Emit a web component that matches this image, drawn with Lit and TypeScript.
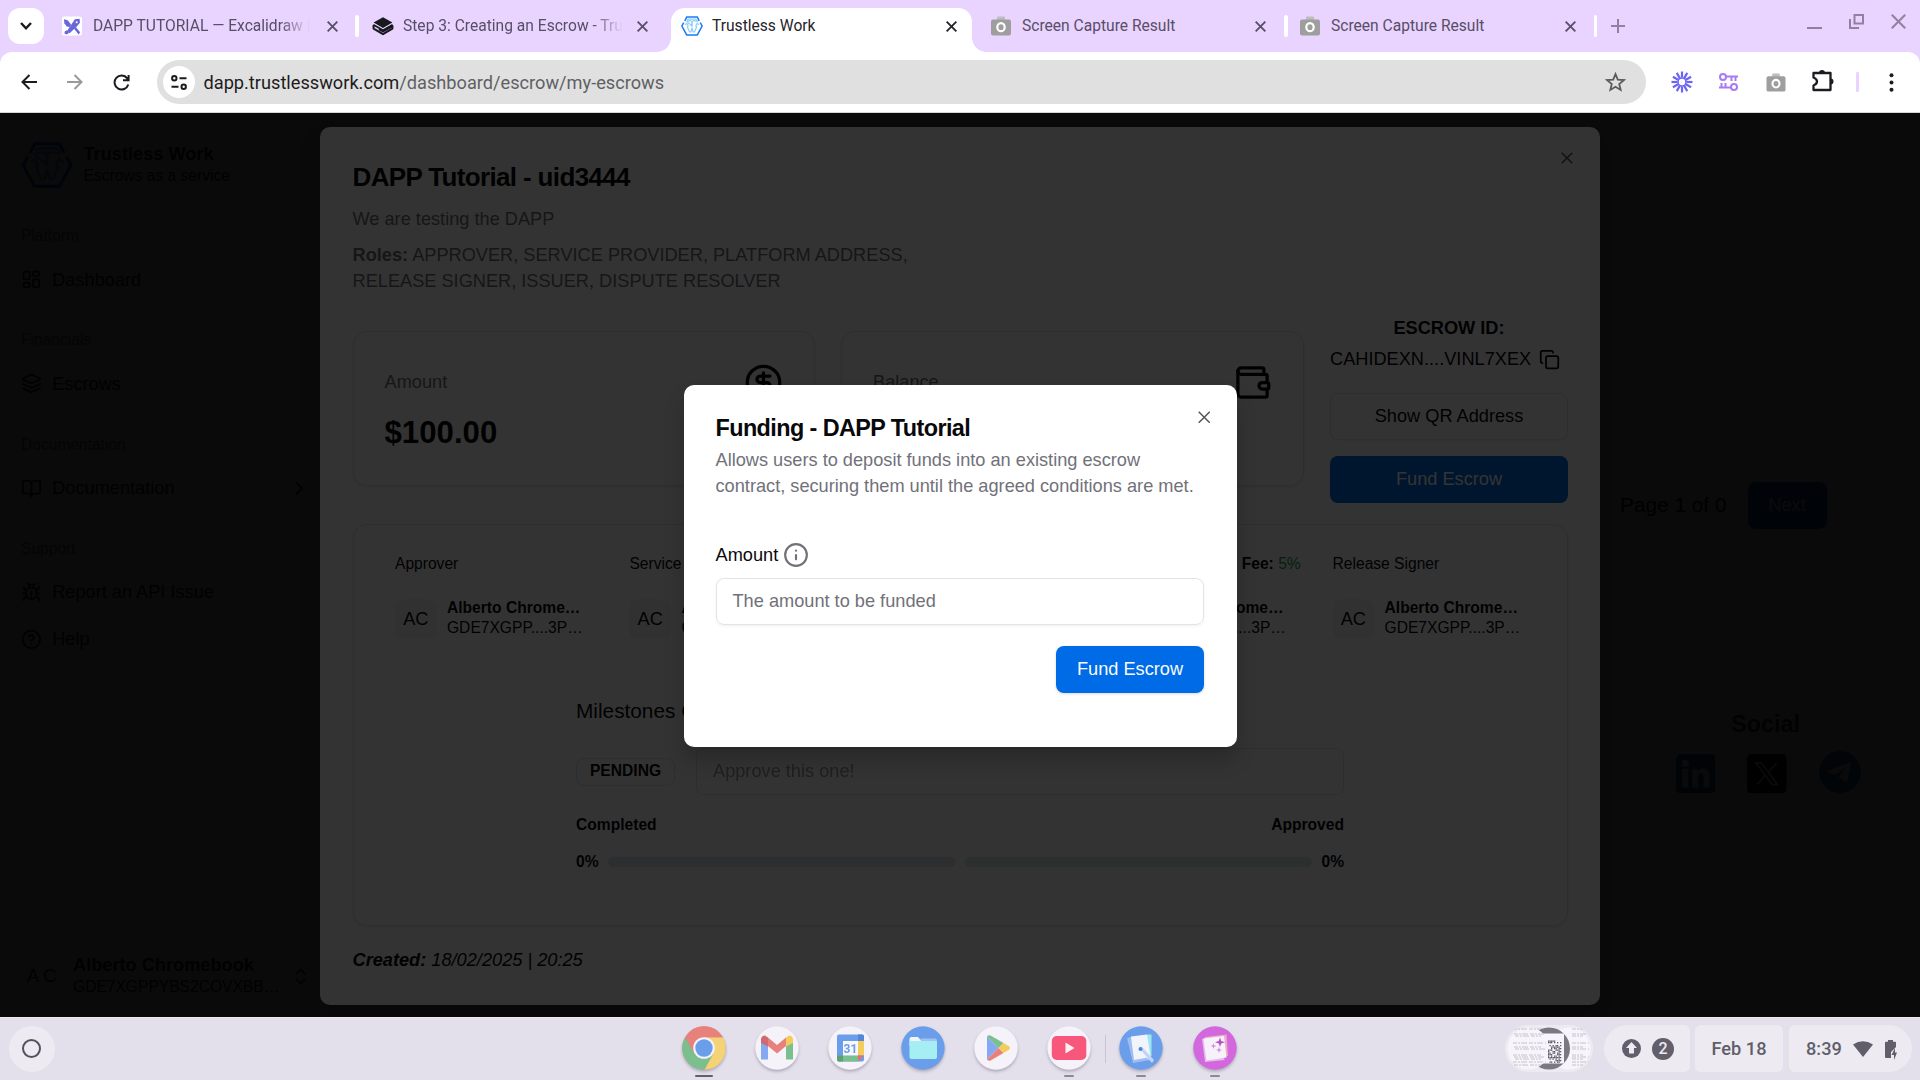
import { LitElement, html, svg, css, type TemplateResult, type SVGTemplateResult } from "lit";
import { customElement } from "lit/decorators.js";

/* ---------- line icons on a 24 unit grid ---------- */
const line = (body: SVGTemplateResult, cls = "i20") =>
  html`<svg class="ln ${cls}" viewBox="0 0 24 24" fill="none" stroke="currentColor" stroke-width="2" stroke-linecap="round" stroke-linejoin="round">${body}</svg>`;

const icons = {
  dashboard: svg`<rect x="3" y="3" width="7" height="9" rx="1"/><rect x="14" y="3" width="7" height="5" rx="1"/><rect x="14" y="12" width="7" height="9" rx="1"/><rect x="3" y="16" width="7" height="5" rx="1"/>`,
  layers: svg`<path d="m12.83 2.18a2 2 0 0 0-1.66 0L2.6 6.08a1 1 0 0 0 0 1.83l8.58 3.91a2 2 0 0 0 1.66 0l8.58-3.9a1 1 0 0 0 0-1.83Z"/><path d="m22 17.65-9.17 4.16a2 2 0 0 1-1.66 0L2 17.65"/><path d="m22 12.65-9.17 4.16a2 2 0 0 1-1.66 0L2 12.65"/>`,
  book: svg`<path d="M12 7v14"/><path d="M3 18a1 1 0 0 1-1-1V4a1 1 0 0 1 1-1h5a4 4 0 0 1 4 4 4 4 0 0 1 4-4h5a1 1 0 0 1 1 1v13a1 1 0 0 1-1 1h-6a3 3 0 0 0-3 3 3 3 0 0 0-3-3z"/>`,
  bug: svg`<path d="m8 2 1.88 1.88"/><path d="M14.12 3.88 16 2"/><path d="M9 7.13v-1a3.003 3.003 0 1 1 6 0v1"/><path d="M12 20c-3.3 0-6-2.7-6-6v-3a4 4 0 0 1 4-4h4a4 4 0 0 1 4 4v3c0 3.3-2.7 6-6 6"/><path d="M12 20v-9"/><path d="M6.53 9C4.6 8.8 3 7.1 3 5"/><path d="M6 13H2"/><path d="M3 21c0-2.1 1.7-3.9 3.8-4"/><path d="M20.97 5c0 2.1-1.6 3.8-3.5 4"/><path d="M22 13h-4"/><path d="M17.2 17c2.1.1 3.8 1.9 3.8 4"/>`,
  help: svg`<circle cx="12" cy="12" r="10"/><path d="M9.09 9a3 3 0 0 1 5.83 1c0 2-3 3-3 3"/><path d="M12 17h.01"/>`,
  chevron: svg`<path d="m9 18 6-6-6-6"/>`,
  updown: svg`<path d="m7 15 5 5 5-5"/><path d="m7 9 5-5 5 5"/>`,
  dollar: svg`<circle cx="12" cy="12" r="10"/><path d="M16 8h-6a2 2 0 1 0 0 4h4a2 2 0 1 1 0 4H8"/><path d="M12 18V6"/>`,
  wallet: svg`<path d="M19 7V4a1 1 0 0 0-1-1H5a2 2 0 0 0 0 4h15a1 1 0 0 1 1 1v4h-3a2 2 0 0 0 0 4h3a1 1 0 0 0 1-1v-2a1 1 0 0 0-1-1"/><path d="M3 5v14a2 2 0 0 0 2 2h15a1 1 0 0 0 1-1v-4"/>`,
  copy: svg`<rect width="14" height="14" x="8" y="8" rx="2"/><path d="M4 16c-1.1 0-2-.9-2-2V4c0-1.1.9-2 2-2h10c1.1 0 2 .9 2 2"/>`,
  info: svg`<circle cx="12" cy="12" r="10"/><path d="M12 16v-4"/><path d="M12 8h.01"/>`,
};

const cross = (cls: string) =>
  html`<svg class=${cls} viewBox="0 0 12 12" fill="none" stroke="currentColor"><path d="M.7.7 11.3 11.3M11.3.7.7 11.3"/></svg>`;

const hexLogo = (cls: string, outer: string, inner: string, w: number) => html`
  <svg class=${cls} viewBox="0 0 52 46" fill="none" stroke-width=${w}>
    <path stroke=${outer} d="M9 11 13.500 1.800H38.500L43 11M45.500 15 50 23 38.500 44.200H13.500L2 23 6.500 15"/>
    <g stroke=${inner} stroke-width=${w * 0.8}>
      <path d="M14 8.500 18 6.500H34L38 8.500V12L32 10.500Q28 9.500 26.500 13V23M25.500 23V13Q24 9.500 20 10.500L14 12Z"/>
      <path d="M9.500 20 14 17 17 23 15 25 20 37 23.500 37 26 27 28.500 37 32 37 37 25 35 23 38 17 42.500 20"/>
    </g>
  </svg>`;

const camera = html`
  <svg class="fav" viewBox="0 0 20 20">
    <path fill="#bdbdbd" d="M6 4V1.500Q6 .5 7 .5h6q1 0 1 1V4Z"/>
    <path fill="#9e9e9e" d="M0 5.500Q0 3.500 2 3.500H18Q20 3.500 20 5.500V17.500Q20 19.500 18 19.500H2Q0 19.500 0 17.500Z"/>
    <ellipse cx="10" cy="11.200" rx="3.700" ry="4" fill="#9e9e9e" stroke="#fff" stroke-width="2.200"/>
  </svg>`;

const excalidraw = html`
  <svg class="fav" viewBox="0 0 21 20">
    <rect width="21" height="20" rx="3" fill="#fff"/>
    <g fill="#6965db">
      <path d="M2 3 6 4 9.500 8.500 8.200 11 5 10.500 2.500 7Z"/>
      <path d="M13.500 3 18.500 2.500 18.800 6.500 15.500 10.500 8 17.500 5.500 15Z"/>
      <path d="M3 15.500 5.500 14.500 7.500 17 5 19 2.500 18Z"/>
      <path d="M12.500 12.500 14.500 11 19 16.500 17.500 19Z"/>
    </g>
    <circle cx="15.400" cy="6" r="1.100" fill="#fff"/>
  </svg>`;

const gitbook = html`
  <svg class="fav wide" viewBox="0 0 22 20">
    <path fill="#17191e" d="M11 1.200 20.400 6.600 11 12 1.600 6.600Z"/>
    <path fill="none" stroke="#17191e" stroke-width="2.100" stroke-linejoin="round" d="M1.600 9V12.600L11 18.200 20.400 12.600V10L11 15.300 7 13"/>
    <path fill="none" stroke="#17191e" stroke-width="1.800" d="M1.400 8.700 11 14.200 20.600 8.700"/>
  </svg>`;

interface Tab { cls: string; icon: TemplateResult; title: string }

@customElement("browser-tabs")
class BrowserTabs extends LitElement {
  static styles = css`
    :host { display: flex; height: 52px; background: #e8d4ff; font-family: Roboto, sans-serif; font-size: 15.600px; color: #584e66; }
    .search { width: 36px; height: 36px; margin: 8px 8px 0; border-radius: 12px; background: #fff; display: flex; align-items: center; justify-content: center; }
    .search svg { width: 12px; height: 8px; }
    .tab { display: flex; align-items: center; box-sizing: border-box; height: 52px; }
    .fav { width: 20px; height: 20px; flex: none; }
    .fav.wide { width: 22px; }
    .hex { width: 22px; height: 20px; flex: none; }
    .title { flex: 1; overflow: hidden; white-space: nowrap; margin-left: 11px; line-height: 22px; }
    .fade .title { -webkit-mask-image: linear-gradient(90deg, #000 86%, transparent); mask-image: linear-gradient(90deg, #000 86%, transparent); }
    .x { width: 11px; height: 11px; flex: none; stroke-width: 2; }
    .t1 { width: 303px; padding: 0 17px 0 10px; }
    .t1 .title { margin: 0 17px 0 11px; }
    .t2 { width: 312px; padding: 0 23px 0 13px; }
    .t2 .title { margin: 0 14px 0 9px; }
    .t3 { width: 301px; padding: 0 15px 0 10px; background: #fff; border-radius: 14px 14px 0 0; height: 44px; margin-top: 8px; padding-bottom: 8px; color: #26232b; position: relative; }
    .t3 .title { margin-left: 9px; }
    .t3::before, .t3::after { content: ""; position: absolute; bottom: 0; width: 14px; height: 14px; }
    .t3::before { left: -14px; background: radial-gradient(circle at 0 0, transparent 13.500px, #fff 14px); }
    .t3::after { right: -14px; background: radial-gradient(circle at 100% 0, transparent 13.500px, #fff 14px); }
    .t4 { width: 312px; padding: 0 18px 0 19px; }
    .t5 { width: 306px; padding: 0 18px 0 12px; }
    .div { width: 4px; height: 22px; margin-top: 15px; background: #fff; border-radius: 2px; }
    .div.thin { width: 3px; }
    .plus { width: 14px; height: 14px; margin: 19px 0 0 14px; stroke: #8f819f; stroke-width: 2; }
    .win { display: flex; gap: 27px; margin: 14px 14px 0 auto; color: #8f819f; }
    .win svg { width: 15px; height: 15px; stroke-width: 2; fill: none; stroke: currentColor; }
  `;
  private tabs: Tab[] = [
    { cls: "t1 fade", icon: excalidraw, title: "DAPP TUTORIAL — Excalidraw Plus" },
    { cls: "t2 fade", icon: gitbook, title: "Step 3: Creating an Escrow - Trustless Work" },
    { cls: "t3", icon: hexLogo("hex", "#1a7df0", "#8fd0fb", 3.6), title: "Trustless Work" },
    { cls: "t4", icon: camera, title: "Screen Capture Result" },
    { cls: "t5", icon: camera, title: "Screen Capture Result" },
  ];
  render() {
    return html`
      <div class="search"><svg viewBox="0 0 12 8" fill="none" stroke="#1d1b20" stroke-width="2.400"><path d="M1 1 6 6.300 11 1"/></svg></div>
      ${this.tabs.map((t, i) => html`
        <div class="tab ${t.cls}">${t.icon}<span class="title">${t.title}</span>${cross("x")}</div>
        ${i === 1 || i === 2 ? "" : html`<div class="div ${i === 4 ? "thin" : ""}"></div>`}
      `)}
      <svg class="plus" viewBox="0 0 14 14"><path d="M7 0V14M0 7H14"/></svg>
      <div class="win">
        <svg viewBox="0 0 15 15"><path d="M0 14H15"/></svg>
        <svg viewBox="0 0 15 15"><path d="M5.500 1H14V9.500H5.500ZM1 5V14H10"/></svg>
        <svg viewBox="0 0 15 15"><path d="M.8.8 14.200 14.200M14.200.8.8 14.200"/></svg>
      </div>`;
  }
}

@customElement("browser-toolbar")
class BrowserToolbar extends LitElement {
  static styles = css`
    :host { display: block; height: 61px; background: #e8d4ff; }
    .bar { height: 61px; box-sizing: border-box; background: #fff; border-radius: 12px 12px 0 0; border-bottom: 1px solid #d5d7d5; display: flex; align-items: center; padding-left: 21px; }
    .nav { width: 16px; height: 16px; fill: none; stroke: #1d1b20; stroke-width: 2; flex: none; }
    .fwd { stroke: #9a9a9c; margin-left: 30px; }
    .rel { width: 17px; height: 17px; margin-left: 30px; }
    .omni { margin-left: 26.500px; width: 1489px; height: 44px; border-radius: 22px; background: #e0e0e0; display: flex; align-items: center; box-sizing: border-box; padding: 0 20px 0 6px; font: 18.200px/24px Roboto, sans-serif; color: #5f6064; }
    .site { width: 32px; height: 32px; border-radius: 50%; background: #fff; display: flex; align-items: center; justify-content: center; margin-right: 9px; }
    .site svg { width: 16px; height: 15px; }
    .omni b { font-weight: 400; color: #1d1b20; }
    .url { flex: 1; white-space: nowrap; padding-top: 1px; }
    .star { width: 21px; height: 20px; }
    .burst { width: 22px; height: 22px; margin-left: 25px; }
    .keys { width: 19px; height: 20px; margin-left: 26px; }
    .cam { width: 20px; height: 19px; margin-left: 28px; }
    .cam .fav { width: 20px; height: 19px; display: block; }
    .puz { width: 22px; height: 23px; margin: -4px 0 0 26px; }
    .div { width: 3px; height: 20px; background: #e8d4ff; margin-left: 22px; border-radius: 1px; }
    .dots { width: 5px; height: 19px; margin-left: 30px; }
  `;
  render() {
    const rays = Array.from({ length: 12 }, (_, i) => i * 30);
    return html`<div class="bar">
      <svg class="nav" viewBox="0 0 16 16"><path d="M16 8H1.800M8.500 1 1.500 8 8.500 15"/></svg>
      <svg class="nav fwd" viewBox="0 0 16 16"><path d="M0 8H14.200M7.500 1 14.500 8 7.500 15"/></svg>
      <svg class="nav rel" viewBox="0 0 17 17"><path d="M15.300 10.500A7 7 0 1 1 14.200 4.300L15.600 6.200M15.600 1V6.300H10"/></svg>
      <div class="omni">
        <div class="site"><svg viewBox="0 0 16 15" fill="none" stroke="#1d1b20" stroke-width="2"><circle cx="3.300" cy="3.300" r="2.200"/><path d="M8.500 3.300H15.500M.5 11.700H7.500"/><circle cx="12.700" cy="11.700" r="2.200"/></svg></div>
        <span class="url"><b>dapp.trustlesswork.com</b>/dashboard/escrow/my-escrows</span>
        <svg class="star" viewBox="0 0 22 21" fill="none" stroke="#5a5b5f" stroke-width="1.900"><path d="M11 2.200 13.400 8 19.800 8.500 14.900 12.600 16.400 18.800 11 15.500 5.600 18.800 7.100 12.600 2.200 8.500 8.600 8Z"/></svg>
      </div>
      <svg class="burst" viewBox="0 0 22 22" fill="none" stroke="#6a66f5" stroke-width="2.200">
        <circle cx="11" cy="11" r="4" stroke-width="1.600"/>
        ${rays.map((a) => svg`<path d="M11 .5V6.500" transform="rotate(${a} 11 11)"/>`)}
      </svg>
      <svg class="keys" viewBox="0 0 19 20" fill="none" stroke="#a77bf5" stroke-width="2">
        <circle cx="4" cy="5" r="3"/><path d="M7 4.500H19M12.500 5V9M16.500 5V9"/>
        <circle cx="15" cy="15" r="3"/><path d="M12 15.500H0M2.500 15V11M6.500 15V11"/>
      </svg>
      <div class="cam">${camera}</div>
      <svg class="puz" viewBox="0 0 22 23"><path fill="none" stroke="#1d1b20" stroke-width="2.300" stroke-linejoin="round" d="M1.500 4H18.500V21H1.500V16.500Q5 15 5 12.500 5 10 1.500 8.500Z"/><path fill="#1d1b20" d="M7 4a3 3 0 0 1 6 0ZM18.500 9.500a3 3 0 0 1 0 6Z"/></svg>
      <div class="div"></div>
      <svg class="dots" viewBox="0 0 5 19" fill="#1d1b20"><circle cx="2.500" cy="2.300" r="2"/><circle cx="2.500" cy="9.500" r="2"/><circle cx="2.500" cy="16.700" r="2"/></svg>
    </div>`;
  }
}

const sans = css`"Liberation Sans", Arial, sans-serif`;

/* The application behind both dimming layers. */
@customElement("dashboard-page")
class DashboardPage extends LitElement {
  static styles = css`
    :host { display: flex; height: 904px; background: #fff; font: 18.200px/26px ${sans}; color: #09090b; }
    .ln { flex: none; }
    .i20 { width: 20.800px; height: 20.800px; }
    .side { width: 335px; box-sizing: border-box; display: flex; flex-direction: column; padding: 29px 0 10px 21px; background: #fbfbfb; color: #27272a; }
    .brand { display: flex; height: 46px; align-items: center; margin-bottom: 28px; }
    .hex { width: 52px; height: 46px; margin-right: 10.500px; }
    .name { font-weight: 700; line-height: 21px; white-space: nowrap; }
    .sub { font-size: 15.600px; line-height: 21px; white-space: nowrap; }
    .label { height: 40px; line-height: 40px; font-size: 15.600px; color: #77777a; }
    .item { height: 47px; display: flex; align-items: center; gap: 10.400px; width: 289px; }
    .item span { flex: 1; }
    .group { padding-bottom: 17.300px; }
    .user { margin-top: auto; height: 62px; display: flex; align-items: center; padding-left: 6px; }
    .av { width: 46px; white-space: nowrap; }
    .who { width: 205px; margin-right: 12px; overflow: hidden; }
    .main { flex: 1; padding-top: 368.500px; display: flex; flex-direction: column; align-items: flex-end; }
    .pager { display: flex; align-items: center; gap: 21px; font-size: 20.800px; margin-right: 93.500px; }
    .next { width: 79px; height: 47px; border-radius: 8px; background: #006be6; color: #fff; font-size: 18.200px; line-height: 47px; text-align: center; }
    .social { margin: 180px 59.500px 0 0; width: 185px; }
    .social h3 { margin: 0 5px 13px 0; text-align: center; font: 700 23.400px/31px ${sans}; color: #3b4453; }
    .row { display: flex; justify-content: space-between; align-items: center; height: 42px; }
    .row svg { width: 39.500px; height: 39.500px; }
    .row svg.tg { width: 42px; height: 42px; margin-top: -4px; }
  `;
  render() {
    return html`
      <aside class="side">
        <div class="brand">${hexLogo("hex", "#0060e0", "#6fc0ff", 3)}
          <div><div class="name">Trustless Work</div><div class="sub">Escrows as a service</div></div>
        </div>
        <div class="group"><div class="label">Platform</div><div class="item">${line(icons.dashboard)}<span>Dashboard</span></div></div>
        <div class="group"><div class="label">Financials</div><div class="item">${line(icons.layers)}<span>Escrows</span></div></div>
        <div class="group"><div class="label">Documentation</div><div class="item">${line(icons.book)}<span>Documentation</span>${line(icons.chevron)}</div></div>
        <div class="group"><div class="label">Support</div>
          <div class="item">${line(icons.bug)}<span>Report an API Issue</span></div>
          <div class="item">${line(icons.help)}<span>Help</span></div></div>
        <div class="user"><span class="av">A C</span>
          <div class="who"><div class="name">Alberto Chromebook</div><div class="sub">GDE7XGPPYBS2COVXBB…</div></div>
          ${line(icons.updown)}</div>
      </aside>
      <main class="main">
        <div class="pager"><span>Page 1 of 0</span><span class="next">Next</span></div>
        <div class="social"><h3>Social</h3>
          <div class="row">
            <svg viewBox="0 0 40 40"><rect width="40" height="40" rx="5" fill="#0077b5"/><g fill="#fff"><circle cx="9.500" cy="9.500" r="3.500"/><path d="M6.500 15H12.500V34H6.500ZM16.500 15H22V17.600Q24 14.500 28 14.500 34 14.500 34 22.500V34H28V24Q28 19.500 25.200 19.500 22.500 19.500 22.500 24V34H16.500Z"/></g></svg>
            <svg viewBox="0 0 40 40"><rect width="40" height="40" rx="5" fill="#000"/><path fill="none" stroke="#fff" stroke-width="1.800" d="M9 9H14.500L31 31H25.500ZM30 9 21.500 18.500M18 22 10 31"/></svg>
            <svg class="tg" viewBox="0 0 42 42"><circle cx="21" cy="21" r="21" fill="#1c93d2"/><path fill="#fff" d="M7.500 20.500 32 11 28 32 19.500 26 27 17 15.500 24Z"/></svg>
          </div>
        </div>
      </main>`;
  }
}

/* The escrow detail window. */
@customElement("escrow-detail")
class EscrowDetail extends LitElement {
  static styles = css`
    :host { display: flex; flex-direction: column; box-sizing: border-box; width: 1280px; height: 878px; padding: 37px 32.500px 0; border: 0; border-radius: 10px; background: #fff; box-shadow: 0 13px 20px rgba(0,0,0,.2); font: 18.200px/26px ${sans}; color: #09090b; position: relative; }
    .ln { flex: none; }
    .big { width: 39px; height: 39px; }
    .i20 { width: 21px; height: 21px; }
    .x { position: absolute; right: 27px; top: 25px; width: 12px; height: 12px; stroke-width: 1.400; opacity: .7; }
    h2 { margin: 0; font: 700 26px/26px ${sans}; letter-spacing: -.65px; }
    .muted { color: #71717a; }
    .desc { margin-top: 16px; }
    .roles { margin-top: 10px; width: 600px; }
    .top { display: grid; grid-template-columns: 462.500px 463px 238px; gap: 26px; margin-top: 21px; height: 187px; }
    .card { border: 1.300px solid #e4e4e7; border-radius: 14px; box-sizing: border-box; box-shadow: 0 1px 3px rgba(0,0,0,.1); }
    .stat { margin-top: 16px; height: 155px; padding: 31px 31px 0; }
    .head { display: flex; justify-content: space-between; align-items: center; height: 39px; }
    .head span { padding-bottom: 2px; }
    .val { font: 700 31.200px/42px ${sans}; margin-top: 10px; }
    .id { display: flex; flex-direction: column; }
    .id b { text-align: center; }
    .addr { display: flex; justify-content: space-between; align-items: center; height: 26px; margin: 5px 8px 0 0; white-space: nowrap; }
    .btn { height: 47px; border-radius: 8px; line-height: 44px; text-align: center; box-sizing: border-box; }
    .out { border: 1.300px solid #e4e4e7; margin-top: 21px; box-shadow: 0 1px 2px rgba(0,0,0,.05); }
    .pri { background: #006be6; color: #fff; margin-top: 15.500px; line-height: 47px; }
    .lower { margin-top: 22px; height: 401.500px; }
    .people { display: grid; grid-template-columns: repeat(5, 234.400px); padding: 26.500px 0 0 41.500px; font-size: 15.600px; height: 114px; box-sizing: border-box; }
    .person { width: 202.500px; overflow: hidden; }
    .plabel { display: flex; justify-content: space-between; height: 24px; line-height: 24px; white-space: nowrap; }
    .plabel em { font-style: normal; color: #16a34a; }
    .who { display: flex; align-items: center; margin-top: 22px; gap: 10.400px; line-height: 20.800px; white-space: nowrap; }
    .nm { padding-bottom: 3px; }
    .av { width: 41.600px; height: 41.600px; border-radius: 10.400px; background: #f4f4f5; text-align: center; line-height: 41.600px; font-size: 18.200px; }
    .miles { width: 768px; margin: 59px auto 0; }
    .mt { font-size: 20.800px; line-height: 26px; }
    .mrow { display: flex; justify-content: space-between; align-items: center; height: 47px; margin-top: 24px; }
    .badge { width: 99px; height: 28px; box-sizing: border-box; border: 1.300px solid #e4e4e7; border-radius: 8px; font: 700 15.600px/23px ${sans}; text-align: center; }
    .inp { width: 648px; height: 47px; box-sizing: border-box; border: 1.300px solid #e4e4e7; border-radius: 8px; line-height: 44px; padding-left: 16px; }
    .inp span { opacity: .7; }
    .lab { display: flex; justify-content: space-between; font-weight: 700; font-size: 15.600px; margin-top: 17px; }
    .bars { display: flex; align-items: center; gap: 9px; font-weight: 700; font-size: 15.600px; margin-top: 11px; line-height: 26px; }
    .bar { flex: 1; height: 10.400px; border-radius: 5.200px; background: #dde4ee; }
    .bar.g { background: #d5e8e4; }
    .created { font-style: italic; margin-top: 21px; }
  `;
  render() {
    const people: [string, boolean][] = [["Approver", false], ["Service Provider", false], ["Dispute Resolver", false], ["Platform", true], ["Release Signer", false]];
    return html`
      ${cross("x")}
      <h2>DAPP Tutorial - uid3444</h2>
      <div class="desc muted">We are testing the DAPP</div>
      <div class="roles muted"><b>Roles:</b> APPROVER, SERVICE PROVIDER, PLATFORM ADDRESS, RELEASE SIGNER, ISSUER, DISPUTE RESOLVER</div>
      <div class="top">
        <div class="card stat"><div class="head"><span class="muted">Amount</span>${line(icons.dollar, "big")}</div><div class="val">$100.00</div></div>
        <div class="card stat"><div class="head"><span class="muted">Balance</span>${line(icons.wallet, "big")}</div><div class="val">$0.00</div></div>
        <div class="id"><b>ESCROW ID:</b>
          <div class="addr"><span>CAHIDEXN....VINL7XEX</span>${line(icons.copy)}</div>
          <div class="btn out">Show QR Address</div>
          <div class="btn pri">Fund Escrow</div>
        </div>
      </div>
      <div class="card lower">
        <div class="people">${people.map(([p, fee]) => html`
          <div class="person">
            <div class="plabel"><span>${p}</span>${fee ? html`<span><b>Fee:</b> <em>5%</em></span>` : ""}</div>
            <div class="who"><div class="av">AC</div><div class="nm"><b>Alberto Chrome…</b><div>GDE7XGPP....3P…</div></div></div>
          </div>`)}
        </div>
        <div class="miles">
          <div class="mt">Milestones Completed</div>
          <div class="mrow"><div class="badge">PENDING</div><div class="inp muted"><span>Approve this one!</span></div></div>
          <div class="lab"><span>Completed</span><span>Approved</span></div>
          <div class="bars"><span>0%</span><div class="bar"></div><div class="bar g"></div><span>0%</span></div>
        </div>
      </div>
      <div class="created"><b>Created:</b> 18/02/2025 | 20:25</div>`;
  }
}

@customElement("funding-dialog")
class FundingDialog extends LitElement {
  static styles = css`
    :host { display: flex; flex-direction: column; box-sizing: border-box; width: 553px; height: 361.500px; padding: 29.500px 32.500px 0 32px; border-radius: 10px; background: #fff; box-shadow: 0 13px 20px rgba(0,0,0,.2); font: 18.200px/26px ${sans}; color: #09090b; position: relative; }
    .x { position: absolute; right: 26.500px; top: 25.500px; width: 12.500px; height: 12.500px; stroke-width: 1.400; opacity: .7; }
    h2 { margin: 0; font: 700 23.400px/26px ${sans}; letter-spacing: -.585px; }
    p { margin: 6.500px 0 0; color: #71717a; }
    .lab { display: flex; align-items: center; gap: 5px; height: 26px; margin-top: 42.500px; }
    .ic { width: 26px; height: 26px; color: #71717a; }
    .inp { height: 47px; box-sizing: border-box; border: 1.300px solid #e4e4e7; border-radius: 8px; box-shadow: 0 1px 3px rgba(0,0,0,.06); margin-top: 10.500px; line-height: 44px; padding-left: 16px; color: #71717a; }
    .btn { align-self: flex-end; width: 148px; height: 47px; border-radius: 8px; background: #006be6; color: #fafafa; text-align: center; line-height: 47px; margin-top: 20.500px; box-shadow: 0 1px 3px rgba(0,0,0,.15); }
  `;
  render() {
    return html`${cross("x")}
      <h2>Funding - DAPP Tutorial</h2>
      <p>Allows users to deposit funds into an existing escrow contract, securing them until the agreed conditions are met.</p>
      <div class="lab">Amount ${line(icons.info, "ic")}</div>
      <div class="inp">The amount to be funded</div>
      <div class="btn">Fund Escrow</div>`;
  }
}

/* Dock artwork on a 44 unit disc. */
const disc = (fill: string, body: SVGTemplateResult) =>
  html`<svg class="app" viewBox="0 0 44 44"><circle cx="22" cy="22" r="21.700" fill=${fill}/>${body}</svg>`;

const dock = {
  chrome: disc("#e8807c", svg`
    <path fill="#7bbf8e" d="M3.200 11.200A21.700 21.700 0 0 0 22.500 43.700L32 27.500H12.500Z"/>
    <path fill="#f4d377" d="M22.500 43.700A21.700 21.700 0 0 0 40.900 11.200H22L31.500 27.500Z"/>
    <path fill="#e8807c" d="M3.200 11.200A21.700 21.700 0 0 1 40.900 11.200H22Q15 12 12.600 19.500L12.500 27.500Z"/>
    <circle cx="22" cy="22" r="10.800" fill="#f4f2f8"/><circle cx="22" cy="22" r="8.700" fill="#6a9eea"/>`),
  gmail: disc("#f5f3f9", svg`
    <path fill="#85a9f0" d="M6 13V33.500H13V18Z"/><path fill="#7bbf8e" d="M31 18V33.500H38V13Z"/>
    <path fill="#e8807c" d="M13 11.500 22 19 31 11.500V20L22 27.500 13 20Z"/>
    <path fill="#d06a6e" d="M6 17V13Q6.500 9.500 10 9.500L13 11.500V20.500Z"/><path fill="#f4cc5c" d="M38 17V13Q37.500 9.500 34 9.500L31 11.500V20.500Z"/>`),
  calendar: disc("#f5f3f9", svg`
    <rect x="9" y="8.500" width="27" height="27" rx="2" fill="#6a9eea"/>
    <path fill="#5584d8" d="M30 8.500H34Q36 8.500 36 10.500V15H30Z"/><path fill="#f4cc5c" d="M30 15H36V29.500H30Z"/>
    <path fill="#7bbf8e" d="M9 29.500H30V35.500H11Q9 35.500 9 33.500Z"/><path fill="#5aa274" d="M9 29.500H15V35.500H11Q9 35.500 9 33.500Z"/><path fill="#e8706c" d="M30 29.500H36L30 35.500Z"/>
    <rect x="15" y="15" width="15" height="14.500" fill="#f8f7fb"/>
    <text x="22.400" y="26.700" font-family="Roboto, sans-serif" font-size="12" font-weight="700" fill="#6a9eea" text-anchor="middle">31</text>`),
  files: disc("#6a9eea", svg`
    <path fill="#a6c0f2" d="M20 12.500H34Q36 12.500 36 14.500V20H14Z"/><path fill="#f2f4fb" d="M8.500 13Q8.500 11 10.500 11H17L20 14.500V20H8.500Z"/>
    <path fill="#a5eef4" d="M8.500 15H36V31Q36 33 34 33H10.500Q8.500 33 8.500 31Z"/>`),
  play: disc("#f5f3f9", svg`
    <path fill="#85a9f0" d="M13 10.500V33.500L24.500 22Z"/><path fill="#7bbf8e" d="M13 10.500Q14.500 8.500 17 9.800L29.500 17 24.500 22Z"/>
    <path fill="#e8807c" d="M13 33.500Q14.500 35.500 17 34.200L29.500 27 24.500 22Z"/><path fill="#f4cc5c" d="M29.500 17 35 20.300Q37 22 35 23.700L29.500 27 24.500 22Z"/>`),
  youtube: disc("#f5f3f9", svg`
    <rect x="4.800" y="10" width="34.500" height="24" rx="5" fill="#f6577b"/><path fill="#fbeff4" d="M18.500 16.500V27.500L27.500 22Z"/>`),
  journal: disc("#6a9eea", svg`
    <path fill="#9fbdf0" d="M8 12 13 11 31 34 14 37Z"/><path fill="#9be8f2" d="M28 8.500H32.500V30L28 34Z"/>
    <path fill="#f2f4fb" d="M12 10.500 28 8.500 31.500 31 15 34Z"/><path fill="#c3d3f5" d="M20 22 23 21 35 34 33 37Z"/><circle cx="21.500" cy="23" r="2" fill="#4c86e0"/>`),
  sparkle: disc("#d367de", svg`
    <path fill="#f0aac4" d="M12 11 33.500 8.500 35 30 14 33Z"/><path fill="#eab8f0" d="M9 13 14 12 32 34 12 36Z"/>
    <path fill="#f5f3f9" d="M10.500 12.500 31 10 33.500 31.500 13.500 34.500Z"/>
    <path fill="#b84fc8" d="M27 11.500 28.200 15 32 16.200 28.200 17.400 27 21 25.800 17.400 22 16.200 25.800 15Z"/>
    <path fill="#d988e4" d="M20.500 17 21.200 19.300 23.500 20 21.200 20.700 20.500 23 19.800 20.700 17.500 20 19.800 19.300ZM26 21 26.800 23.200 29 24 26.800 24.800 26 27 25.200 24.800 23 24 25.200 23.200Z"/>`),
};

@customElement("system-shelf")
class SystemShelf extends LitElement {
  static styles = css`
    :host { display: flex; height: 63px; box-sizing: border-box; background: #e3e0eb; font: 500 18.200px Roboto, sans-serif; color: #615e6a; border-top: 1px solid #edeaf2; }
    .left { width: 682px; flex: none; padding: 7.500px 0 0 8.500px; box-sizing: border-box; }
    .launch { width: 46px; height: 46px; border-radius: 50%; background: #edeaf2; display: flex; align-items: center; justify-content: center; }
    .launch i { width: 15px; height: 15px; border: 2px solid #55525e; border-radius: 50%; }
    .dock { display: flex; flex: none; }
    .slot { width: 73.100px; flex: none; display: flex; flex-direction: column; align-items: flex-start; }
    .slot.yt { width: 57.500px; }
    .app { width: 44px; height: 44px; margin-top: 8px; filter: drop-shadow(0 2px 1.500px rgba(60,50,80,.3)); }
    .ind { width: 10px; height: 2px; border-radius: 1px; background: #8d8798; margin: 5px 0 0 17px; }
    .ind.wide { width: 18px; background: #625e6c; margin-left: 13px; }
    .sep { width: 1px; height: 28px; background: #c9c5d2; margin: 17px 13.500px 0 0; }
    .tray { margin-left: auto; margin-right: 8px; margin-top: 7px; display: flex; height: 47px; }
    .pill { background: #edeaf2; border-radius: 6px; height: 47px; display: flex; align-items: center; justify-content: center; box-sizing: border-box; }
    .thumb { width: 88px; border-radius: 24px; margin-right: 11px; overflow: hidden; }
    .thumb svg { width: 88px; height: 47px; }
    .note { width: 86px; border-radius: 24px 6px 6px 24px; margin-right: 5px; gap: 11px; padding-left: 2px; }
    .note svg { width: 19px; height: 19px; }
    .cnt { width: 22px; height: 22px; border-radius: 50%; background: #625e6c; color: #edeaf2; font-size: 16px; line-height: 22px; text-align: center; }
    .date { width: 88px; margin-right: 6px; }
    .stat { width: 123px; border-radius: 6px 24px 24px 6px; justify-content: flex-start; padding-left: 17px; }
    .wifi { width: 20px; height: 16px; margin-left: 11px; }
    .bat { width: 12px; height: 20px; margin: 3px 0 0 12px; }
  `;
  render() {
    const rows = [4, 9, 11, 18, 22, 24, 30, 32, 34, 37, 40];
    const cells: SVGTemplateResult[] = [];
    for (let y = 0; y < 22; y += 1.5) for (let x = 0; x < 13; x += 1.5) {
      if ((Math.round(x * 7 + y * 13 + x * y) % 5) < 3) cells.push(svg`<rect x=${43 + x} y=${15.5 + y} width="1.300" height="1.300"/>`);
    }
    return html`
      <div class="left"><div class="launch"><i></i></div></div>
      <div class="dock">
        <div class="slot">${dock.chrome}<div class="ind wide"></div></div>
        <div class="slot">${dock.gmail}</div>
        <div class="slot">${dock.calendar}</div>
        <div class="slot">${dock.files}</div>
        <div class="slot">${dock.play}</div>
        <div class="slot yt">${dock.youtube}<div class="ind"></div></div>
        <div class="sep"></div>
        <div class="slot">${dock.journal}<div class="ind"></div></div>
        <div class="slot">${dock.sparkle}<div class="ind"></div></div>
      </div>
      <div class="tray">
        <div class="pill thumb"><svg viewBox="0 0 88 47">
          <circle cx="64.500" cy="23.500" r="21" fill="#f7f5fb"/>
          <circle cx="44" cy="23.500" r="21" fill="#7b7884"/><path fill="#f7f5fb" d="M28 8.500H59V38.500H28Z"/><circle cx="23.500" cy="23.500" r="21" fill="#f7f5fb"/>
          <g stroke="#b9b6c2" stroke-width=".8" stroke-dasharray="4 1 2 1 6 2">${rows.map((y, i) => svg`<path d="M${8 + (i % 3)} ${y}H${i % 2 ? 41 : 36}M67 ${y}H${i % 2 ? 84 : 78}"/>`)}</g>
          <g fill="#5d5966">${cells}</g></svg></div>
        <div class="pill note"><svg viewBox="0 0 19 19"><circle cx="9.500" cy="9.500" r="9.500" fill="#625e6c"/><path fill="#edeaf2" d="M9.500 3 15 9H12V14.500H7V9H4Z"/></svg><span class="cnt">2</span></div>
        <div class="pill date">Feb 18</div>
        <div class="pill stat">8:39
          <svg class="wifi" viewBox="0 0 20 16" fill="#615e6a"><path d="M0 3.500Q10-3 20 3.500L10 16Z"/></svg>
          <svg class="bat" viewBox="0 0 12 20" fill="#615e6a"><path d="M0 2.500Q0 1.800 1 1.800H3V0H8V1.800H10Q11 1.800 11 2.500V7L6 12V18H1Q0 18 0 17Z"/><path d="M10 8V12.500H12L9 20V15H6.500Z"/></svg>
        </div>
      </div>`;
  }
}

@customElement("app-root")
class AppRoot extends LitElement {
  static styles = css`
    :host { display: flex; flex-direction: column; width: 1920px; height: 1080px; overflow: hidden; }
    .stage { position: relative; height: 904px; overflow: hidden; }
    .dim { position: absolute; inset: 0; background: rgba(0,0,0,.8); }
    .detail { position: absolute; left: 320px; top: 14px; }
    .dialog { position: absolute; left: 683.500px; top: 272px; }
  `;
  render() {
    return html`
      <browser-tabs></browser-tabs>
      <browser-toolbar></browser-toolbar>
      <div class="stage">
        <dashboard-page></dashboard-page>
        <div class="dim"></div>
        <escrow-detail class="detail"></escrow-detail>
        <div class="dim"></div>
        <funding-dialog class="dialog"></funding-dialog>
      </div>
      <system-shelf></system-shelf>`;
  }
}
